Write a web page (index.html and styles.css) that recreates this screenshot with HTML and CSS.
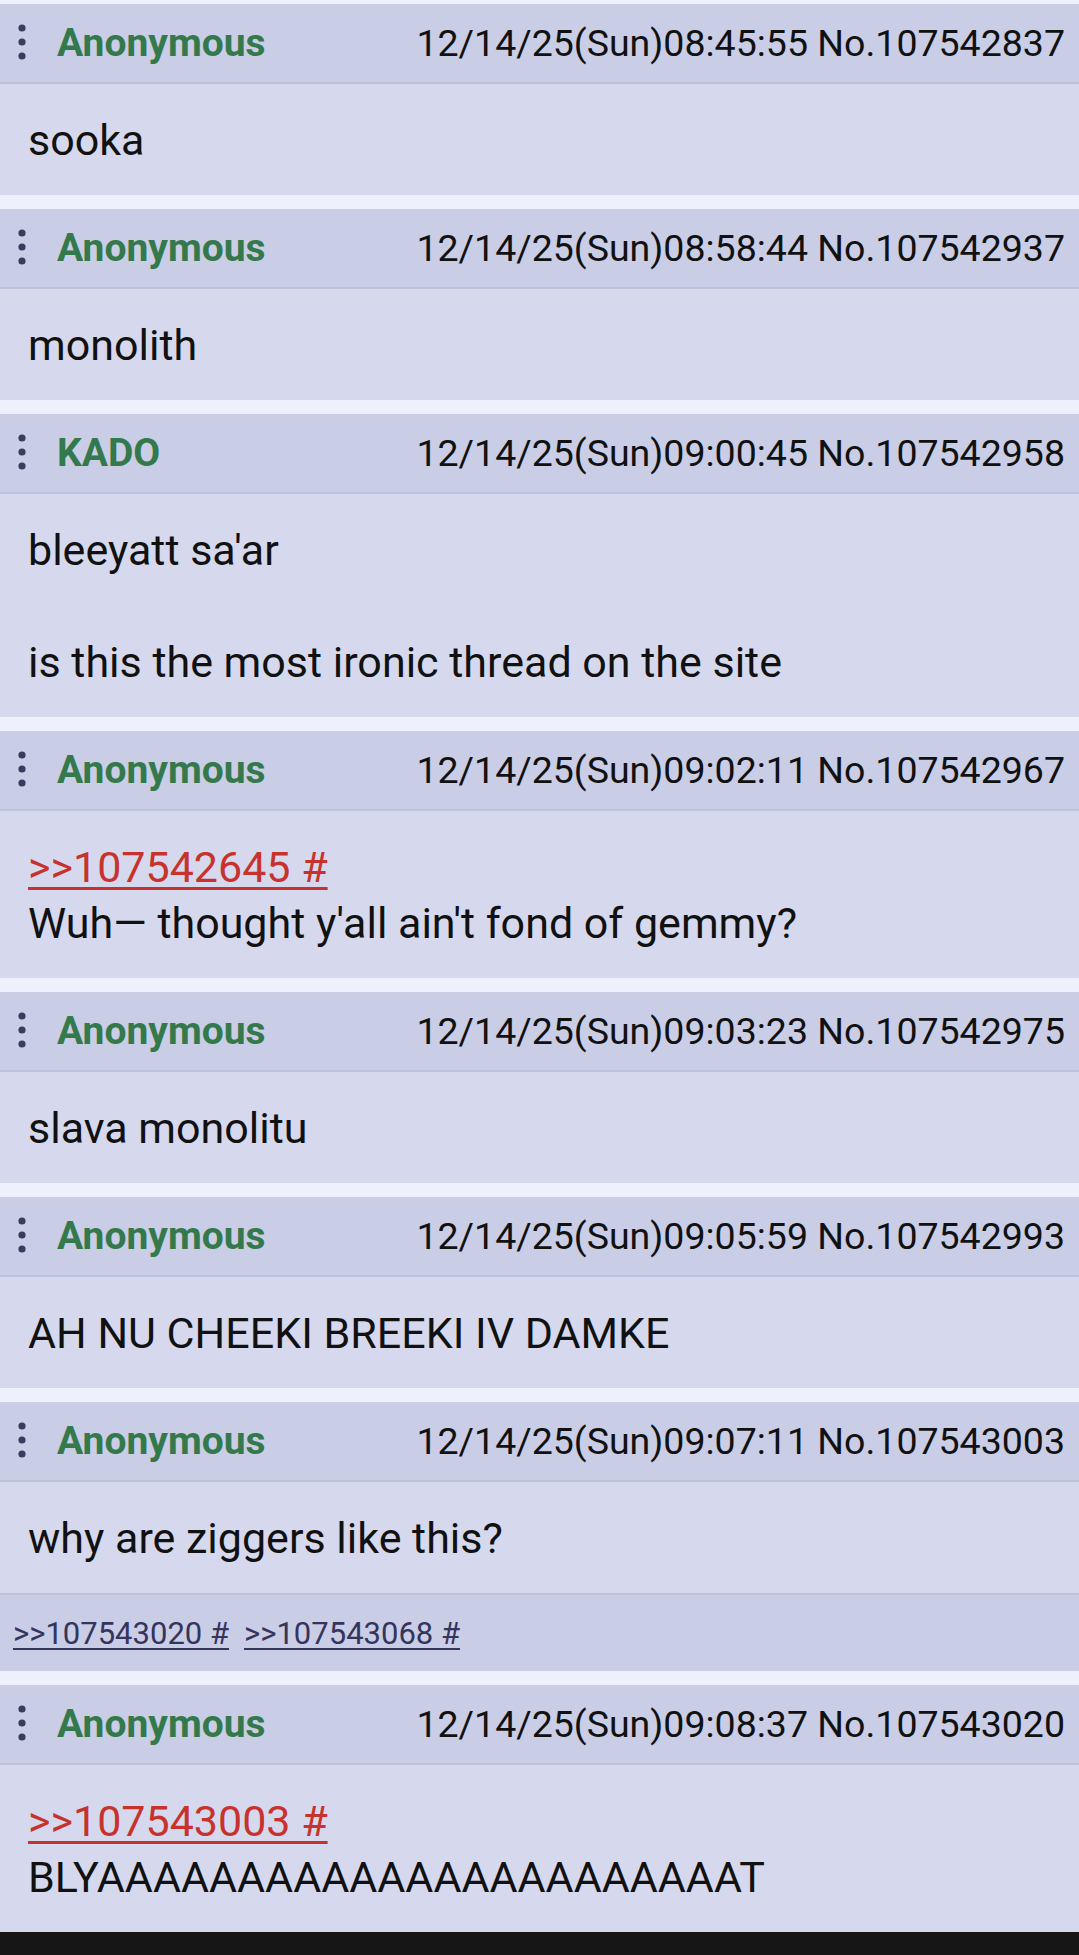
FILE: index.html
```html
<!DOCTYPE html>
<html lang="en">

<head>
    <meta charset="UTF-8">
    <meta name="viewport" content="width=device-width, initial-scale=1.0">
    <title>Thread</title>
    <link rel="stylesheet" href="styles.css">
</head>

<body>
    <div class="thread">
        <div class="post">
            <div class="post-head">
                <svg class="menu" width="8" height="36" viewBox="0 0 8 36"><circle cx="4" cy="4" r="3.6"/><circle cx="4" cy="18" r="3.6"/><circle cx="4" cy="32" r="3.6"/></svg>
                <span class="name">Anonymous</span>
                <span class="date">12/14/25(Sun)08:45:55 No.107542837</span>
            </div>
            <div class="post-text">sooka</div>
        </div>

        <div class="post">
            <div class="post-head">
                <svg class="menu" width="8" height="36" viewBox="0 0 8 36"><circle cx="4" cy="4" r="3.6"/><circle cx="4" cy="18" r="3.6"/><circle cx="4" cy="32" r="3.6"/></svg>
                <span class="name">Anonymous</span>
                <span class="date">12/14/25(Sun)08:58:44 No.107542937</span>
            </div>
            <div class="post-text">monolith</div>
        </div>

        <div class="post">
            <div class="post-head">
                <svg class="menu" width="8" height="36" viewBox="0 0 8 36"><circle cx="4" cy="4" r="3.6"/><circle cx="4" cy="18" r="3.6"/><circle cx="4" cy="32" r="3.6"/></svg>
                <span class="name">KADO</span>
                <span class="date">12/14/25(Sun)09:00:45 No.107542958</span>
            </div>
            <div class="post-text">bleeyatt sa'ar<br><br>is this the most ironic thread on the site</div>
        </div>

        <div class="post">
            <div class="post-head">
                <svg class="menu" width="8" height="36" viewBox="0 0 8 36"><circle cx="4" cy="4" r="3.6"/><circle cx="4" cy="18" r="3.6"/><circle cx="4" cy="32" r="3.6"/></svg>
                <span class="name">Anonymous</span>
                <span class="date">12/14/25(Sun)09:02:11 No.107542967</span>
            </div>
            <div class="post-text"><a class="quote" href="#">&gt;&gt;107542645 #</a><br>Wuh— thought y'all ain't fond of gemmy?</div>
        </div>

        <div class="post">
            <div class="post-head">
                <svg class="menu" width="8" height="36" viewBox="0 0 8 36"><circle cx="4" cy="4" r="3.6"/><circle cx="4" cy="18" r="3.6"/><circle cx="4" cy="32" r="3.6"/></svg>
                <span class="name">Anonymous</span>
                <span class="date">12/14/25(Sun)09:03:23 No.107542975</span>
            </div>
            <div class="post-text">slava monolitu</div>
        </div>

        <div class="post">
            <div class="post-head">
                <svg class="menu" width="8" height="36" viewBox="0 0 8 36"><circle cx="4" cy="4" r="3.6"/><circle cx="4" cy="18" r="3.6"/><circle cx="4" cy="32" r="3.6"/></svg>
                <span class="name">Anonymous</span>
                <span class="date">12/14/25(Sun)09:05:59 No.107542993</span>
            </div>
            <div class="post-text">AH NU CHEEKI BREEKI IV DAMKE</div>
        </div>

        <div class="post">
            <div class="post-head">
                <svg class="menu" width="8" height="36" viewBox="0 0 8 36"><circle cx="4" cy="4" r="3.6"/><circle cx="4" cy="18" r="3.6"/><circle cx="4" cy="32" r="3.6"/></svg>
                <span class="name">Anonymous</span>
                <span class="date">12/14/25(Sun)09:07:11 No.107543003</span>
            </div>
            <div class="post-text">why are ziggers like this?</div>
            <div class="replies">
                <a href="#">&gt;&gt;107543020 #</a>
                <a href="#">&gt;&gt;107543068 #</a>
            </div>
        </div>

        <div class="post">
            <div class="post-head">
                <svg class="menu" width="8" height="36" viewBox="0 0 8 36"><circle cx="4" cy="4" r="3.6"/><circle cx="4" cy="18" r="3.6"/><circle cx="4" cy="32" r="3.6"/></svg>
                <span class="name">Anonymous</span>
                <span class="date">12/14/25(Sun)09:08:37 No.107543020</span>
            </div>
            <div class="post-text"><a class="quote" href="#">&gt;&gt;107543003 #</a><br>BLYAAAAAAAAAAAAAAAAAAAAAAAT</div>
        </div>
    </div>
    <div class="navbar"></div>
</body>

</html>
```

FILE: styles.css
```css
body {
    margin: 0;
    background: #eef1fc;
    font-family: Roboto, "Liberation Sans", sans-serif;
    color: #111;
    overflow: hidden;
}

.thread {
    padding-top: 4px;
}

.post {
    margin-bottom: 14px;
    background: #d6d9ee;
}

.post:last-child {
    margin-bottom: 0;
}

.post-head {
    display: flex;
    align-items: center;
    height: 78px;
    padding: 0 14px 0 18px;
    background: #c9cde6;
    border-bottom: 2px solid #bdc1dc;
}

.menu {
    fill: #3b3b5e;
    margin-top: -3px;
}

.name {
    margin-left: 31px;
    font-size: 39px;
    font-weight: bold;
    color: #34794c;
}

.date {
    margin-left: auto;
    font-size: 37.5px;
    color: #111;
}

.post-text {
    padding: 28px 28px 27px;
    font-size: 43px;
    line-height: 56px;
}

.quote {
    color: #c8322d;
    text-decoration: underline;
    text-decoration-thickness: 3px;
    text-underline-offset: 5px;
}

.replies {
    display: flex;
    gap: 15px;
    height: 76px;
    align-items: center;
    padding: 0 13px;
    background: #c9cde6;
    border-top: 2px solid #bdc1dc;
}

.replies a {
    font-size: 31px;
    color: #34345c;
    text-decoration-thickness: 2px;
    text-underline-offset: 4px;
}

.navbar {
    height: 24px;
    background: #161616;
}
```
